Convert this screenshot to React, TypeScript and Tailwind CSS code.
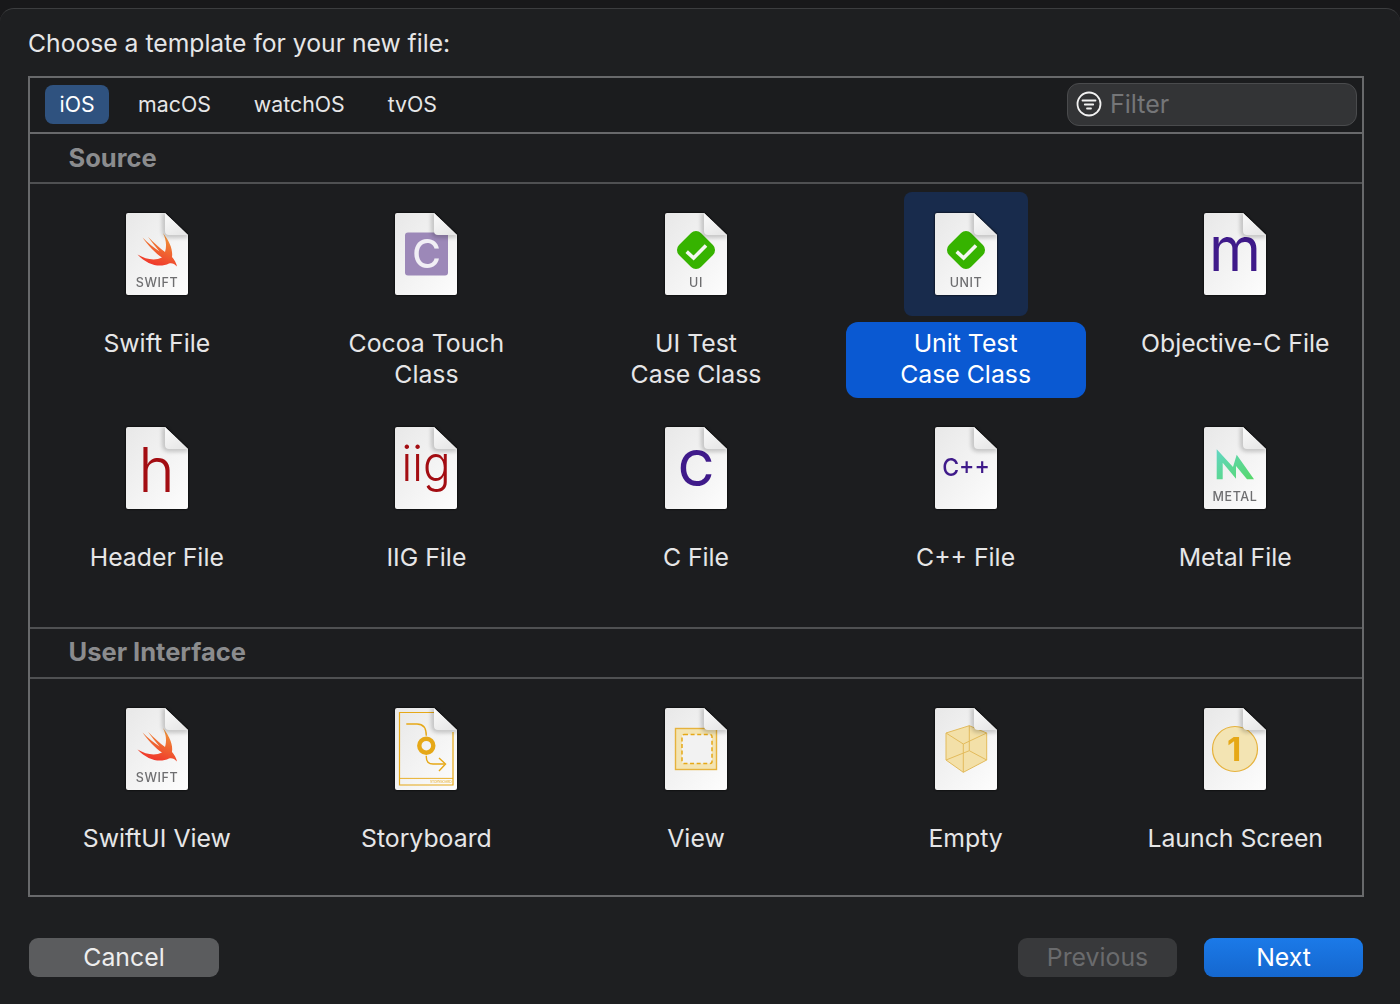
import type { ReactNode } from "react";

const ink = "#3f1a8a";
const red = "#a30d12";
const gold = "#e6a817";
const sans = "Inter, sans-serif";

function Tag({ children }: { children: string }) {
  return (
    <text x="31" y="74" textAnchor="middle" fontFamily={sans} fontSize="12.5" fontWeight={500} letterSpacing="0.6" fill="#6e6e70">
      {children}
    </text>
  );
}

function Glyph({
  children,
  x = 31,
  y,
  size,
  fill,
  weight = 400,
  length,
}: {
  children: string;
  x?: number;
  y: number;
  size: number;
  fill: string;
  weight?: number;
  length?: number;
}) {
  return (
    <text
      x={x}
      y={y}
      textAnchor="middle"
      fontFamily={sans}
      fontSize={size}
      fontWeight={weight}
      fill={fill}
      textLength={length}
      lengthAdjust={length ? "spacingAndGlyphs" : undefined}
    >
      {children}
    </text>
  );
}

function Bird() {
  return (
    <path
      d="M37 20C44 29 47 37 46 44C48.5 47 50.5 50.5 51 53.5C48.5 50.5 45.5 49.5 43 50.5C34 55 22 52.5 11.5 41.5C20 46.5 29 48 36 44.5C29 40 21.5 31.5 16.5 24.5C22 30 28 35 33.5 38.5C29.5 33.5 25 28.5 22 23.8C28 30 34 35.5 39 39C41 33 40 26 37 20Z"
      fill="url(#swift)"
    />
  );
}

function Check() {
  return (
    <>
      <rect x="15.5" y="21.5" width="31" height="31" rx="7" fill="#36b300" transform="rotate(45 31 37)" />
      <path d="M21.7 38.6L28.6 45L41 32.4" fill="none" stroke="#f4f6f0" strokeWidth="3.6" />
    </>
  );
}

function FileIcon({ children }: { children?: ReactNode }) {
  return (
    <svg width="62" height="82" viewBox="0 0 62 82" className="drop-shadow-[0_0_1px_#000]">
      <path d="M2 0H39L62 22V80a2 2 0 0 1-2 2H2a2 2 0 0 1-2-2V2a2 2 0 0 1 2-2Z" fill="url(#page)" />
      {children}
      <path d="M39 0V18q0 4 4 4H62" fill="none" stroke="#000" strokeWidth="5" opacity="0.22" filter="url(#soft)" />
      <path d="M39 0L62 22H43q-4 0-4-4Z" fill="url(#fold)" />
    </svg>
  );
}

const icons: Record<string, ReactNode> = {
  swift: (
    <>
      <Bird />
      <Tag>SWIFT</Tag>
    </>
  ),
  cocoa: (
    <>
      <rect x="10" y="19.5" width="43" height="43" rx="3" fill="#9c88b8" />
      <Glyph x={31.5} y={55} size={39} weight={500} fill="#f1eff5">C</Glyph>
    </>
  ),
  ui: (
    <>
      <Check />
      <Tag>UI</Tag>
    </>
  ),
  unit: (
    <>
      <Check />
      <Tag>UNIT</Tag>
    </>
  ),
  m: <Glyph y={58} size={62} fill={ink} length={52}>m</Glyph>,
  h: <Glyph x={30.5} y={64.5} size={62} fill={red} weight={350}>h</Glyph>,
  iig: <Glyph y={54} size={49} fill={red} length={49} weight={350}>iig</Glyph>,
  c: <Glyph y={59} size={49} weight={450} fill={ink}>C</Glyph>,
  cpp: <Glyph y={48.5} size={24} weight={500} fill={ink} length={47.6}>C++</Glyph>,
  metal: (
    <>
      <path
        d="M12.7 22.3L29 40L32.7 27.7L50 52.3H43L32 39V51.7L18.7 35.7V52.3H12.7Z"
        fill="url(#metal)"
      />
      <Tag>METAL</Tag>
    </>
  ),
  storyboard: (
    <>
      <path d="M39 4.5H4.5V77H58V24" fill="none" stroke={gold} strokeWidth="1.2" />
      <path d="M4.5 70.4H58" stroke={gold} strokeWidth="0.9" />
      <text x="56.5" y="75" textAnchor="end" fontFamily={sans} fontSize="3.2" fill={gold}>
        STORYBOARD
      </text>
      <path d="M11.3 16H22Q31.3 16 31.3 27.7" fill="none" stroke={gold} strokeWidth="1.4" />
      <circle cx="31.3" cy="37.7" r="7" fill="none" stroke={gold} strokeWidth="4.4" />
      <path d="M31.3 47.7V49Q31.3 56 38 56H49.7" fill="none" stroke={gold} strokeWidth="1.4" />
      <path d="M44 50L50.5 56L44 63" fill="none" stroke={gold} strokeWidth="1.4" />
    </>
  ),
  view: (
    <>
      <rect x="10.5" y="20.5" width="41" height="41" fill="#f3e4b3" stroke="#e6b23c" strokeWidth="1.4" />
      <rect x="17" y="26.5" width="30" height="29" rx="2" fill="#f2f2f2" stroke={gold} strokeWidth="1.5" strokeDasharray="4 2.6" />
    </>
  ),
  empty: (
    <g stroke="#e3bb5c" strokeWidth="1" strokeLinejoin="round">
      <path d="M11 25L34.3 17.7L51.7 25V52L28.3 64.3L11 52Z" fill="#f3e0a8" />
      <path d="M11 25L28.3 36L51.7 25M28.3 36V64.3M34.3 17.7V42.7M11 52L34.3 42.7L51.7 52" fill="none" />
    </g>
  ),
  launch: (
    <>
      <circle cx="31" cy="41" r="22.5" fill="#f3e4b3" stroke="#e6b23c" strokeWidth="1.2" />
      <Glyph x={30} y={53} size={33} fill={gold} weight={700}>1</Glyph>
    </>
  ),
};

const source = [
  { icon: "swift", label: ["Swift File"] },
  { icon: "cocoa", label: ["Cocoa Touch", "Class"] },
  { icon: "ui", label: ["UI Test", "Case Class"] },
  { icon: "unit", label: ["Unit Test", "Case Class"], active: true },
  { icon: "m", label: ["Objective-C File"] },
  { icon: "h", label: ["Header File"] },
  { icon: "iig", label: ["IIG File"] },
  { icon: "c", label: ["C File"] },
  { icon: "cpp", label: ["C++ File"] },
  { icon: "metal", label: ["Metal File"] },
];

const userInterface = [
  { icon: "swift", label: ["SwiftUI View"] },
  { icon: "storyboard", label: ["Storyboard"] },
  { icon: "view", label: ["View"] },
  { icon: "empty", label: ["Empty"] },
  { icon: "launch", label: ["Launch Screen"] },
];

function Tile({ icon, label, active }: { icon: string; label: string[]; active?: boolean }) {
  return (
    <div className="flex flex-col items-center">
      <div className={`flex h-[124px] w-[124px] items-center justify-center rounded-[8px] ${active ? "bg-[#182b4c]" : ""}`}>
        <FileIcon>{icons[icon]}</FileIcon>
      </div>
      <div
        className={`mt-[6px] h-[76px] w-[240px] rounded-[12px] py-[6px] text-center text-[24.8px] leading-[31px] ${
          active ? "bg-[#0a59d2] text-white" : "text-[#e6e6e7]"
        }`}
      >
        {label.map((line) => (
          <div key={line}>{line}</div>
        ))}
      </div>
    </div>
  );
}

function SectionHead({ children, className = "" }: { children: string; className?: string }) {
  return (
    <div className={`flex h-[50px] items-center border-b-2 border-[#4f5052] pl-[38.5px] text-[25.5px] font-bold text-[#8b8c8e] ${className}`}>
      {children}
    </div>
  );
}

export default function App() {
  return (
    <div className="h-[1004px] w-[1400px] overflow-hidden bg-[#18181a] pt-2 font-['Inter',sans-serif]">
      <svg className="absolute h-0 w-0">
        <defs>
          <linearGradient id="page" x1="0" y1="0" x2="1" y2="1">
            <stop offset="0" stopColor="#e8e8e8" />
            <stop offset="1" stopColor="#fdfdfd" />
          </linearGradient>
          <linearGradient id="fold" x1="0" y1="0" x2="0.6" y2="1">
            <stop offset="0" stopColor="#fbfbfb" />
            <stop offset="1" stopColor="#e8e8e8" />
          </linearGradient>
          <linearGradient id="swift" x1="0.75" y1="0" x2="0.35" y2="1">
            <stop offset="0" stopColor="#ef9b38" />
            <stop offset="1" stopColor="#f0322b" />
          </linearGradient>
          <linearGradient id="metal" x1="0" y1="0" x2="1" y2="1">
            <stop offset="0" stopColor="#62d6c4" />
            <stop offset="1" stopColor="#56d868" />
          </linearGradient>
          <filter id="soft" x="-30%" y="-30%" width="160%" height="160%">
            <feGaussianBlur stdDeviation="2" />
          </filter>
        </defs>
      </svg>

      <div className="h-[996px] rounded-t-[14px] border-t border-[#3c3d3f] bg-[#1e1f21] px-[28px]">
        <h1 className="flex h-[67px] items-center pt-[3px] text-[24.7px] font-normal text-[#e6e6e7]">
          Choose a template for your new file:
        </h1>

        <div className="h-[821px] w-[1336px] border-2 border-[#68696b] bg-[#1c1d1f]">
          <div className="flex h-[56px] items-center justify-between border-b-2 border-[#68696b] bg-[#1b1c1e] pb-[2px] pl-[15px] pr-[5px]">
            <div className="flex items-center gap-[15px] text-[21.3px] text-[#e6e6e7]">
              <span className="flex h-[39px] items-center rounded-[8px] bg-[#2f527f] px-[14.5px] pt-[1px] text-white">iOS</span>
              <span className="px-[14px] pt-[1px]">macOS</span>
              <span className="px-[14px] pt-[1px]">watchOS</span>
              <span className="px-[14px] pt-[1px]">tvOS</span>
            </div>
            <div className="flex h-[43px] w-[290px] items-center gap-[8px] rounded-[12px] border-[1.5px] border-[#4a4b4d] bg-[#333436] pl-[8px] text-[25px] text-[#757678]">
              <svg width="26" height="26" viewBox="0 0 26 26" fill="none" stroke="#f2f2f2" strokeLinecap="round">
                <circle cx="13" cy="13" r="11.5" strokeWidth="1.8" />
                <path d="M6.5 9.5H19.5M8.8 13.5H17.2M11 17.5H15" strokeWidth="1.8" />
              </svg>
              <span className="pt-[2px]">Filter</span>
            </div>
          </div>

          <SectionHead>Source</SectionHead>
          <div className="ml-[-8px] grid h-[443px] w-[1348px] grid-cols-5 content-start gap-y-[8px] pt-[8px]">
            {source.map((item) => (
              <Tile key={item.icon} {...item} />
            ))}
          </div>

          <div className="border-t-2 border-[#4f5052]">
            <SectionHead className="pb-[2px]">User Interface</SectionHead>
          </div>
          <div className="ml-[-8px] grid w-[1348px] grid-cols-5 pt-[8px]">
            {userInterface.map((item) => (
              <Tile key={item.icon} {...item} />
            ))}
          </div>
        </div>

        <div className="flex items-center pl-[1px] pr-[9px] pt-[41px] text-[24.8px]">
          <button className="h-[39px] w-[190px] rounded-[9px] bg-[#5b5c5e] text-[#eeeeee]">Cancel</button>
          <button className="ml-auto h-[39px] w-[159px] rounded-[9px] bg-[#38393b] text-[#6a6b6d]">Previous</button>
          <button className="ml-[27px] h-[39px] w-[159px] rounded-[9px] bg-gradient-to-b from-[#1b7ae8] to-[#1567cf] text-white">
            Next
          </button>
        </div>
      </div>
    </div>
  );
}
